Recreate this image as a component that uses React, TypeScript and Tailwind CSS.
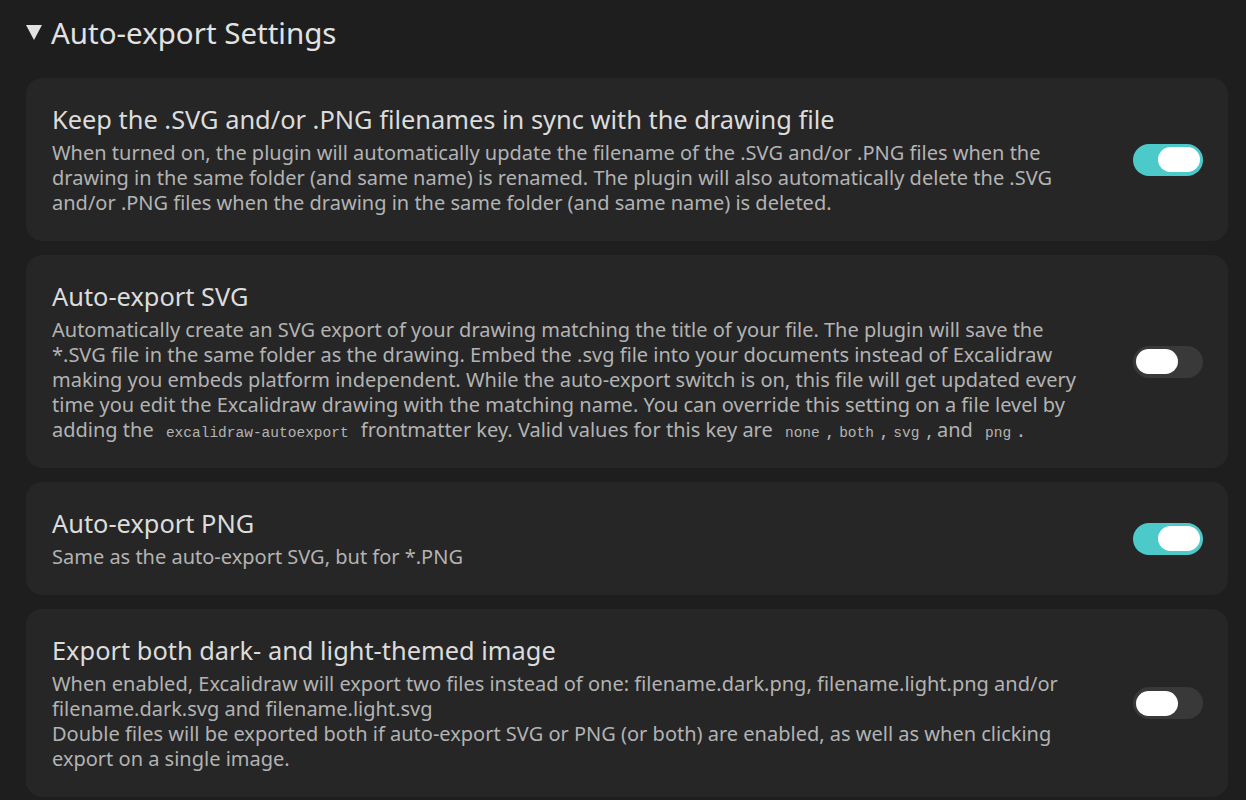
import React from "react";

function Code({ children }: { children: React.ReactNode }) {
    return (
        <code className="px-[7px] text-[14.5px] leading-none text-[#b4b4b4] [font-family:'Liberation_Mono',monospace]">
            {children}
        </code>
    );
}

function Toggle({ on }: { on: boolean }) {
    return (
        <div
            className={
                on
                    ? "flex h-8 w-[70px] shrink-0 items-center justify-end rounded-full bg-[#4cc9c9] px-[3px]"
                    : "flex h-8 w-[70px] shrink-0 items-center justify-start rounded-full bg-[#393939] px-[3px]"
            }
        >
            <div className="h-[25px] w-[42px] rounded-full bg-white" />
        </div>
    );
}

function Setting({
    title,
    on,
    children,
}: {
    title: string;
    on: boolean;
    children: React.ReactNode;
}) {
    return (
        <div className="flex items-center gap-6 rounded-2xl bg-[#262626] pl-[26px] pr-[25px] pt-[26px] pb-[26px]">
            <div className="flex-1">
                <div className="mb-[6px] text-[25.4px] leading-[30px] text-[#dcdcdc]">
                    {title}
                </div>
                <div className="text-[20px] leading-[25px] text-[#b3b3b3]">
                    {children}
                </div>
            </div>
            <Toggle on={on} />
        </div>
    );
}

export default function App() {
    return (
        <div className="min-h-screen bg-[#1e1e1e] pl-[26px] pr-[18px] pt-[15px] pb-4 [font-family:'Noto_Sans',sans-serif]">
            <div className="mb-[28px] flex items-center gap-[9px] text-[29.5px] leading-[35px] text-[#e2e2e2]">
                <svg width="16" height="15" viewBox="0 0 16 15">
                    <path d="M0 0 L16 0 L8 15 Z" fill="#e2e2e2" />
                </svg>
                <span>Auto-export Settings</span>
            </div>
            <div className="flex flex-col gap-[14px]">
                <Setting
                    title="Keep the .SVG and/or .PNG filenames in sync with the drawing file"
                    on={true}
                >
                    When turned on, the plugin will automatically update the
                    filename of the .SVG and/or .PNG files when the
                    <br />
                    drawing in the same folder (and same name) is renamed. The
                    plugin will also automatically delete the .SVG
                    <br />
                    and/or .PNG files when the drawing in the same folder (and
                    same name) is deleted.
                </Setting>
                <Setting title="Auto-export SVG" on={false}>
                    Automatically create an SVG export of your drawing matching
                    the title of your file. The plugin will save the
                    <br />
                    *.SVG file in the same folder as the drawing. Embed the
                    .svg file into your documents instead of Excalidraw
                    <br />
                    making you embeds platform independent. While the
                    auto-export switch is on, this file will get updated every
                    <br />
                    time you edit the Excalidraw drawing with the matching
                    name. You can override this setting on a file level by
                    <br />
                    adding the <Code>excalidraw-autoexport</Code> frontmatter
                    key. Valid values for this key are <Code>none</Code>,
                    <Code>both</Code>,<Code>svg</Code>, and <Code>png</Code>.
                </Setting>
                <Setting title="Auto-export PNG" on={true}>
                    Same as the auto-export SVG, but for *.PNG
                </Setting>
                <Setting
                    title="Export both dark- and light-themed image"
                    on={false}
                >
                    When enabled, Excalidraw will export two files instead of
                    one: filename.dark.png, filename.light.png and/or
                    <br />
                    filename.dark.svg and filename.light.svg
                    <br />
                    Double files will be exported both if auto-export SVG or
                    PNG (or both) are enabled, as well as when clicking
                    <br />
                    export on a single image.
                </Setting>
            </div>
        </div>
    );
}
